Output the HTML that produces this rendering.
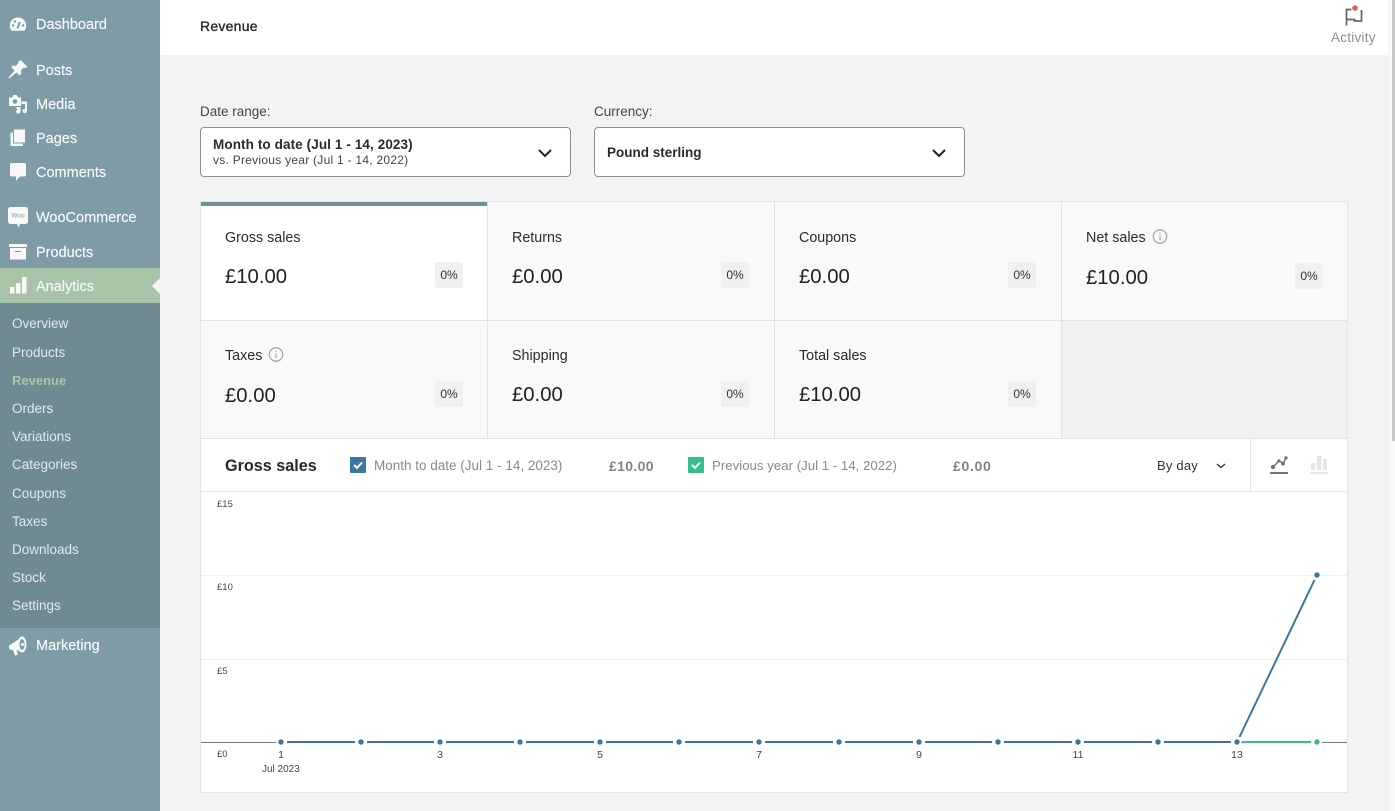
<!DOCTYPE html>
<html><head><meta charset="utf-8"><style>
html,body{margin:0;padding:0;width:1395px;height:811px;overflow:hidden;background:#f3f3f3;font-family:"Liberation Sans",sans-serif;color:#1e1e1e}
.a{position:absolute;white-space:nowrap}
#side{position:absolute;left:0;top:0;width:160px;height:811px;background:#7f9ba6}
.m{position:absolute;left:36px;font-size:14.5px;color:#f7f9f9;line-height:20px;margin-top:1px;-webkit-text-stroke:.15px #f7f9f9}
.s{position:absolute;left:12px;font-size:13.5px;color:#e2e9ea;line-height:18px;margin-top:1px}
.ic{position:absolute;left:8px}
.card{position:absolute;background:#f8f9fb;border-right:1px solid #e2e2e2;border-bottom:1px solid #e2e2e2;box-sizing:border-box}
.lb{position:absolute;left:24px;top:26px;font-size:14.3px;line-height:18px;margin-top:1px;color:#2b2b2b;white-space:nowrap}
.v{position:absolute;left:24px;top:62px;font-size:20.3px;line-height:26px;color:#222;white-space:nowrap}
.p{position:absolute;left:234px;top:60px;width:28px;height:26px;background:#f0f0f0;border-radius:2px;font-size:12px;line-height:27px;text-align:center;color:#333}
.sel{position:absolute;top:127px;width:370.5px;height:50px;box-sizing:border-box;background:#fff;border:1px solid #8c8f94;border-radius:4px}
.yl{position:absolute;left:217px;font-size:9.5px;color:#444;line-height:12px;margin-top:1px}
.xl{position:absolute;top:749px;width:30px;text-align:center;font-size:10.5px;color:#444;line-height:13px}
</style></head><body>
<div class="a" style="left:160px;top:0;width:1235px;height:55px;background:#fff"></div>
<div class="a" style="left:200px;top:17px;font-size:14px;line-height:18px;color:#23282d;letter-spacing:.25px;-webkit-text-stroke:.35px #23282d">Revenue</div>
<svg class="a" style="left:1343px;top:4px" width="22" height="24" viewBox="0 0 22 24"><path d="M3.500 21.500V5.500H8.500M3.500 15.500H11.500V17H18.500V6" fill="none" stroke="#5f6871" stroke-width="1.700"/><circle cx="12" cy="4" r="2.800" fill="#e8585a"/></svg>
<div class="a" style="left:1331px;top:30px;font-size:13.5px;line-height:16px;color:#8a8f94;letter-spacing:.25px">Activity</div>
<div class="a" style="left:1388px;top:0;width:7px;height:811px;background:#fafafa;border-left:1px solid #eee;box-sizing:border-box"></div>
<div class="a" style="left:1392px;top:0;width:3px;height:441px;background:#c6c6c6"></div>

<div id="side">
<div class="a" style="left:0;top:268px;width:160px;height:35px;background:#a9c3a9"></div>
<div class="a" style="left:0;top:303px;width:160px;height:325px;background:#6f8a91"></div>
<div class="a" style="left:152px;top:278px;width:0;height:0;border:8px solid transparent;border-left:0;border-right:8px solid #f3f3f3"></div>
<svg class="ic" style="top:15px" width="20" height="20" viewBox="0 0 20 20"><path d="M10 2.500c-4.700 0-8.200 3.700-8.200 8.200 0 2 .7 3.700 1.800 5h12.800c1.100-1.300 1.800-3 1.800-5 0-4.500-3.500-8.200-8.200-8.200z" fill="#f7f9f9"/><path d="M9.500 13.500l2.200-6.500" stroke="#7f9ba6" stroke-width="2" fill="none"/><circle cx="5" cy="10.500" r="1.200" fill="#7f9ba6"/><circle cx="7" cy="6.500" r="1.200" fill="#7f9ba6"/><circle cx="15" cy="10.500" r="1.200" fill="#7f9ba6"/></svg>
<svg class="ic" style="top:59px" width="20" height="21" viewBox="0 0 20 21"><path d="M12.500 1.500l6.500 6.300-2 .9-1.500-.4-3 3 .5 3.200-1.500 1.500-3-3-7 6-.5-.5 6-7-3-3L4.500 7l3.300.2 3-3L10.500 3z" fill="#f7f9f9" stroke="#f7f9f9" stroke-width=".7"/></svg>
<svg class="ic" style="top:94px" width="20" height="20" viewBox="0 0 20 20"><path d="M1 3.500h3.300l1-2.500h3.400l1 2.500H13v8.500H1z" fill="#f7f9f9"/><circle cx="7" cy="7.500" r="2.300" fill="#7f9ba6"/><path d="M13.500 7.500h5.500v9.500a2.200 2.200 0 1 1-2-2.200v-4.800h-3.500zM8.500 13h4v4.500a2.200 2.200 0 1 1-2-2.200V15h-2z" fill="#f7f9f9"/></svg>
<svg class="ic" style="top:128px" width="20" height="20" viewBox="0 0 20 20"><path d="M6 1.500h11v13H6z" fill="#f7f9f9"/><path d="M2.500 4.500H5v11h10v2.500H2.500z" fill="#f7f9f9"/></svg>
<svg class="ic" style="top:162px" width="20" height="20" viewBox="0 0 20 20"><path d="M4 1h12a2 2 0 0 1 2 2v9.500a2 2 0 0 1-2 2h-4L8 19v-4.500H4a2 2 0 0 1-2-2V3a2 2 0 0 1 2-2z" fill="#f7f9f9"/></svg>
<svg class="a" style="left:8px;top:207px" width="20" height="21" viewBox="0 0 20 21"><path d="M2.500 0h15A2.500 2.500 0 0 1 20 2.500v12a2.500 2.500 0 0 1-2.500 2.500H12l-1.500 3.500L9 17H2.500A2.500 2.500 0 0 1 0 14.500v-12A2.500 2.500 0 0 1 2.500 0z" fill="#f7f9f9"/><text x="10" y="10.500" text-anchor="middle" font-size="6.500" fill="#7f9ba6" font-family="Liberation Sans">Woo</text></svg>
<svg class="ic" style="top:242px" width="20" height="20" viewBox="0 0 20 20"><path d="M1 2h18v3H1z" fill="#f7f9f9"/><path d="M2 6h16v11.500H2z" fill="#f7f9f9"/><path d="M7 9.500h6" stroke="#7f9ba6" stroke-width="1"/></svg>
<svg class="ic" style="top:276px" width="20" height="20" viewBox="0 0 20 20"><path d="M2 11h4.500v6.500H2zM8 7h4.500v10.500H8zM14 1h4.500v16.500H14z" fill="#f7f9f9"/></svg>
<svg class="ic" style="top:635px" width="20" height="22" viewBox="0 0 20 22"><path d="M1 10.500L13 3v13.500L8.500 15l1.500 4.500-3 1.200-2-5.700H3.500A2.500 2.500 0 0 1 1 12.500z" fill="#f7f9f9"/><ellipse cx="14" cy="9.500" rx="4.500" ry="8" fill="#f7f9f9"/><ellipse cx="14" cy="9.500" rx="2.500" ry="5.500" fill="#7f9ba6"/><circle cx="14.500" cy="9.500" r="1.500" fill="#f7f9f9"/></svg>
<div class="m" style="top:14px">Dashboard</div>
<div class="m" style="top:60px">Posts</div>
<div class="m" style="top:94px">Media</div>
<div class="m" style="top:128px">Pages</div>
<div class="m" style="top:162px">Comments</div>
<div class="m" style="top:207px">WooCommerce</div>
<div class="m" style="top:242px">Products</div>
<div class="m" style="top:276px">Analytics</div>
<div class="s" style="top:314px">Overview</div>
<div class="s" style="top:343px">Products</div>
<div class="s" style="top:371px;color:#a9c6a4;font-weight:bold;font-size:13px">Revenue</div>
<div class="s" style="top:399px">Orders</div>
<div class="s" style="top:427px">Variations</div>
<div class="s" style="top:455px">Categories</div>
<div class="s" style="top:484px">Coupons</div>
<div class="s" style="top:512px">Taxes</div>
<div class="s" style="top:540px">Downloads</div>
<div class="s" style="top:568px">Stock</div>
<div class="s" style="top:596px">Settings</div>
<div class="m" style="top:635px">Marketing</div>
</div>

<div class="a" style="left:200px;top:103px;font-size:13.500px;line-height:17px;color:#444">Date range:</div>
<div class="a" style="left:594px;top:103px;font-size:13.500px;line-height:17px;color:#444">Currency:</div>
<div class="sel" style="left:200px">
<div class="a" style="left:12px;top:8px;font-size:13.500px;font-weight:bold;line-height:17px;color:#2a2a2a;letter-spacing:.1px">Month to date (Jul 1 - 14, 2023)</div>
<div class="a" style="left:12px;top:24px;font-size:12px;line-height:16px;color:#444;letter-spacing:.26px">vs. Previous year (Jul 1 - 14, 2022)</div>
<svg class="a" style="left:336px;top:20px" width="16" height="11" viewBox="0 0 16 11"><path d="M2 2l6 6 6-6" fill="none" stroke="#222" stroke-width="2"/></svg>
</div>
<div class="sel" style="left:594px">
<div class="a" style="left:12px;top:16px;font-size:13.500px;font-weight:bold;line-height:17px;color:#2a2a2a">Pound sterling</div>
<svg class="a" style="left:336px;top:20px" width="16" height="11" viewBox="0 0 16 11"><path d="M2 2l6 6 6-6" fill="none" stroke="#222" stroke-width="2"/></svg>
</div>

<div class="a" style="left:200px;top:201px;width:1148px;height:592px;background:#fff;border:1px solid #e4e4e4;box-sizing:border-box"></div>
<div class="a" style="left:1061px;top:320px;width:286px;height:119px;background:#f1f1f1;border-bottom:1px solid #e2e2e2;box-sizing:border-box"></div>

<div class="card" style="left:201px;top:202px;width:287px;height:119px;background:#fff"><div class="a" style="left:0;top:0;width:286px;height:4px;background:#6f8e93"></div><div class="lb">Gross sales</div><div class="v">£10.00</div><div class="p">0%</div></div>
<div class="card" style="left:488px;top:202px;width:287px;height:119px"><div class="lb">Returns</div><div class="v">£0.00</div><div class="p" style="left:233px">0%</div></div>
<div class="card" style="left:775px;top:202px;width:287px;height:119px"><div class="lb">Coupons</div><div class="v">£0.00</div><div class="p" style="left:233px">0%</div></div>
<div class="card" style="left:1062px;top:202px;width:285px;height:119px;border-right:0"><div class="lb" style="left:24px">Net sales</div>
<svg class="a" style="left:90px;top:27px" width="16" height="16" viewBox="0 0 16 16"><circle cx="8" cy="7.500" r="6.700" fill="none" stroke="#a8a8a8" stroke-width="1.300"/><path d="M8 6.500v4.500M8 3.800v1.400" stroke="#a8a8a8" stroke-width="1.200"/></svg>
<div class="v" style="top:63px">£10.00</div><div class="p" style="left:233px;top:61px">0%</div></div>
<div class="card" style="left:201px;top:321px;width:287px;height:118px"><div class="lb" style="top:25px">Taxes</div>
<svg class="a" style="left:67px;top:26px" width="16" height="16" viewBox="0 0 16 16"><circle cx="8" cy="7.500" r="6.700" fill="none" stroke="#a8a8a8" stroke-width="1.300"/><path d="M8 6.500v4.500M8 3.800v1.400" stroke="#a8a8a8" stroke-width="1.200"/></svg>
<div class="v" style="top:62px">£0.00</div><div class="p" style="top:60px">0%</div></div>
<div class="card" style="left:488px;top:321px;width:287px;height:118px"><div class="lb" style="top:25px">Shipping</div><div class="v" style="top:61px">£0.00</div><div class="p" style="left:233px;top:60px">0%</div></div>
<div class="card" style="left:775px;top:321px;width:287px;height:118px"><div class="lb" style="top:25px">Total sales</div><div class="v" style="top:61px">£10.00</div><div class="p" style="left:233px;top:60px">0%</div></div>

<div class="a" style="left:225px;top:456px;font-size:16.200px;font-weight:bold;line-height:20px;color:#23282d">Gross sales</div>
<div class="a" style="left:350px;top:457px;width:16px;height:16px;background:#3a77a0;border-radius:1px"></div>
<svg class="a" style="left:350px;top:457px" width="16" height="16" viewBox="0 0 16 16"><path d="M4 8l3 2.800L12 5.500" fill="none" stroke="#fff" stroke-width="2"/></svg>
<div class="a" style="left:374px;top:458px;font-size:13.500px;line-height:16px;color:#868a8e">Month to date (Jul 1 - 14, 2023)</div>
<div class="a" style="left:609px;top:458px;font-size:14px;font-weight:bold;line-height:16px;color:#7f8387;letter-spacing:.35px">£10.00</div>
<div class="a" style="left:688px;top:457px;width:16px;height:16px;background:#37bf8b;border-radius:1px"></div>
<svg class="a" style="left:688px;top:457px" width="16" height="16" viewBox="0 0 16 16"><path d="M4 8l3 2.800L12 5.500" fill="none" stroke="#fff" stroke-width="2"/></svg>
<div class="a" style="left:712px;top:458px;font-size:13.250px;line-height:16px;color:#868a8e">Previous year (Jul 1 - 14, 2022)</div>
<div class="a" style="left:953px;top:458px;font-size:14px;font-weight:bold;line-height:16px;color:#7f8387;letter-spacing:.7px">£0.00</div>
<div class="a" style="left:1157px;top:458px;font-size:13px;line-height:16px;color:#333;letter-spacing:.2px">By day</div>
<svg class="a" style="left:1215px;top:462px" width="12" height="8" viewBox="0 0 12 8"><path d="M2 2l4 3.500L10 2" fill="none" stroke="#333" stroke-width="1.300"/></svg>
<div class="a" style="left:1250px;top:439px;width:1px;height:52px;background:#e6e6e6"></div>
<div class="a" style="left:201px;top:491px;width:1146px;height:1px;background:#e6e6e6"></div>
<svg class="a" style="left:1268px;top:454px" width="22" height="20" viewBox="0 0 22 20"><path d="M5 13L11 7 15 9.500 18 4" fill="none" stroke="#757575" stroke-width="1.500"/><circle cx="5" cy="13" r="2.200" fill="#757575"/><circle cx="11" cy="7" r="1.700" fill="#757575"/><circle cx="15" cy="9.500" r="2" fill="#757575"/><circle cx="18" cy="4" r="1.700" fill="#757575"/><path d="M2 19h18" stroke="#757575" stroke-width="2"/></svg>
<svg class="a" style="left:1308px;top:454px" width="22" height="20" viewBox="0 0 22 20"><path d="M3 9h4.500v7H3zM9 2h4.500v14H9zM15 5h4v11h-4z" fill="#e4e4e4"/><path d="M2 19h18" stroke="#e8e8e8" stroke-width="2"/></svg>

<svg class="a" style="left:201px;top:492px" width="1146" height="300" viewBox="201 492 1146 300">
<path d="M201 575.500H1347M201 659.500H1347" stroke="#f0f0f0" stroke-width="1"/>
<path d="M201 742.500H276M1322 742.500H1347" stroke="#777" stroke-width="1"/>
<path d="M1241.500 742H1311" stroke="#37bf8b" stroke-width="2"/>
<path d="M287 742H355M367 742H434M446 742H514M526 742H594M606 742H673M685 742H753M765 742H833M845 742H913M925 742H992M1004 742H1072M1084 742H1152M1164 742H1231" stroke="#3a77a0" stroke-width="2"/>
<path d="M1239.500 737L1314.500 580" stroke="#3a77a0" stroke-width="2" fill="none"/>
<g fill="#3a77a0"><circle cx="281" cy="742" r="2.700"/><circle cx="361" cy="742" r="2.700"/><circle cx="440" cy="742" r="2.700"/><circle cx="520" cy="742" r="2.700"/><circle cx="600" cy="742" r="2.700"/><circle cx="679" cy="742" r="2.700"/><circle cx="759" cy="742" r="2.700"/><circle cx="839" cy="742" r="2.700"/><circle cx="919" cy="742" r="2.700"/><circle cx="998" cy="742" r="2.700"/><circle cx="1078" cy="742" r="2.700"/><circle cx="1158" cy="742" r="2.700"/><circle cx="1237" cy="742" r="2.700"/><circle cx="1317" cy="575" r="2.700"/></g>
<circle cx="1317" cy="742" r="2.700" fill="#37bf8b"/>
</svg>
<div class="yl" style="top:498px">£15</div>
<div class="yl" style="top:581px">£10</div>
<div class="yl" style="top:665px">£5</div>
<div class="yl" style="top:748px">£0</div>
<div class="xl" style="left:266px">1</div>
<div class="xl" style="left:425px">3</div>
<div class="xl" style="left:585px">5</div>
<div class="xl" style="left:744px">7</div>
<div class="xl" style="left:904px">9</div>
<div class="xl" style="left:1063px">11</div>
<div class="xl" style="left:1222px">13</div>
<div class="a" style="left:262px;top:763px;font-size:10px;line-height:13px;color:#444">Jul 2023</div>
</body></html>
